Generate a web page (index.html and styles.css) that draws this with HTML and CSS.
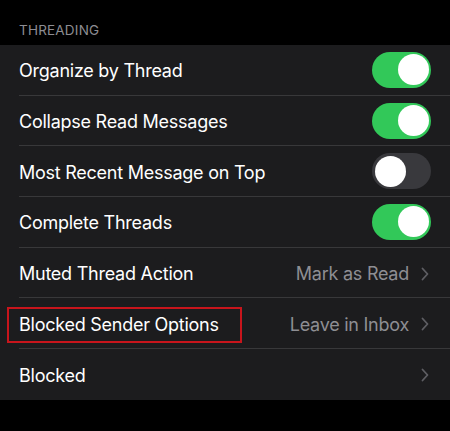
FILE: index.html
```html
<!DOCTYPE html>
<html>
<head>
<meta charset="utf-8">
<link rel="stylesheet" href="styles.css">
</head>
<body>
<div class="header">THREADING</div>
<div class="group">
  <div class="row"><span class="label">Organize by Thread</span><span class="toggle on"><span class="knob"></span></span></div>
  <div class="row"><span class="label">Collapse Read Messages</span><span class="toggle on"><span class="knob"></span></span></div>
  <div class="row"><span class="label">Most Recent Message on Top</span><span class="toggle off"><span class="knob"></span></span></div>
  <div class="row"><span class="label">Complete Threads</span><span class="toggle on"><span class="knob"></span></span></div>
  <div class="row"><span class="label">Muted Thread Action</span><span class="value">Mark as Read</span><svg class="chev" width="8" height="14" viewBox="0 0 8 14"><path d="M1.5 1.5 L6.5 7 L1.5 12.5" fill="none" stroke="#5e5e63" stroke-width="1.8" stroke-linecap="round" stroke-linejoin="round"/></svg></div>
  <div class="row"><span class="highlight"></span><span class="label">Blocked Sender Options</span><span class="value">Leave in Inbox</span><svg class="chev" width="8" height="14" viewBox="0 0 8 14"><path d="M1.5 1.5 L6.5 7 L1.5 12.5" fill="none" stroke="#5e5e63" stroke-width="1.8" stroke-linecap="round" stroke-linejoin="round"/></svg></div>
  <div class="row last"><span class="label">Blocked</span><span class="value"></span><svg class="chev" width="8" height="14" viewBox="0 0 8 14"><path d="M1.5 1.5 L6.5 7 L1.5 12.5" fill="none" stroke="#5e5e63" stroke-width="1.8" stroke-linecap="round" stroke-linejoin="round"/></svg></div>
</div>
</body>
</html>
```
FILE: styles.css
```css
html, body {
  margin: 0;
  padding: 0;
  background: #000;
  width: 450px;
  height: 431px;
  overflow: hidden;
  font-family: Inter, "Liberation Sans", sans-serif;
}
.header {
  height: 45px;
  box-sizing: border-box;
  padding: 22px 0 0 19px;
  color: #8d8d93;
  font-size: 13.5px;
  letter-spacing: 0.2px;
  line-height: 16px;
}
.group {
  background: #1c1c1e;
  padding-left: 19px;
}
.row {
  height: 50.7px;
  box-sizing: border-box;
  display: flex;
  align-items: center;
  padding-right: 19px;
  padding-top: 2px;
  border-bottom: 1px solid #38383a;
  position: relative;
}
.row.last { border-bottom: none; }
.label {
  flex: 1;
  color: #fff;
  font-size: 18px;
  letter-spacing: -0.25px;
}
.highlight {
  position: absolute;
  left: -12px;
  top: 9px;
  width: 235px;
  height: 36px;
  box-sizing: border-box;
  border: 2px solid #c8151c;
}
.value {
  color: #8e8e93;
  font-size: 18px;
  letter-spacing: -0.25px;
  margin-right: 12px;
}
.chev { display: block; margin-right: 2px; }
.toggle {
  width: 59px;
  height: 36px;
  border-radius: 18px;
  box-sizing: border-box;
  padding: 2.5px;
  display: flex;
  margin-top: -2px;
}
.toggle.on { background: #32c859; justify-content: flex-end; }
.toggle.off { background: #39393d; justify-content: flex-start; }
.knob {
  width: 31px;
  height: 31px;
  border-radius: 50%;
  background: #fff;
}
```
